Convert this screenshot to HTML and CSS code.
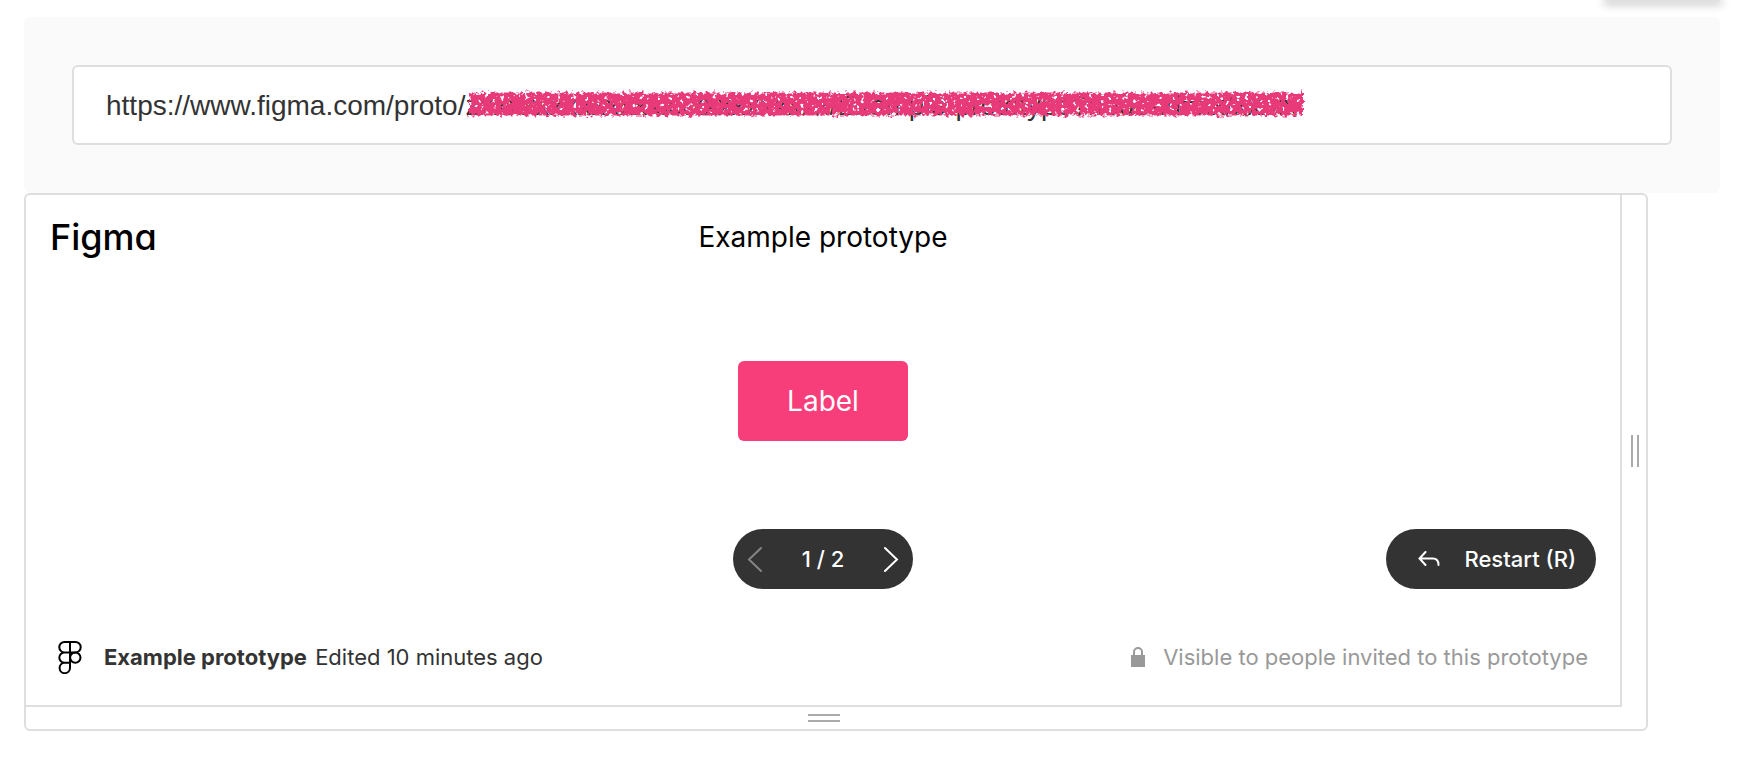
FILE: index.html
```html
<!DOCTYPE html>
<html lang="en">
<head>
  <meta charset="UTF-8">
  <meta name="viewport" content="width=device-width, initial-scale=1.0">
  <title>Example prototype</title>
  <link rel="stylesheet" href="styles.css">
</head>
<body>

<div class="page">
  <div class="toolbar">
    <div class="toolbar-edge"></div>
  </div>

  <div class="url-panel">
    <div class="url-field">
      <input type="text" class="url-input" aria-label="Prototype URL" value="https://www.figma.com/proto/zxxxxxxxxxxxxxxxxxxxxxxxxx/Example-prototype?node-id=xx/xx/xx">
      <svg class="scribble" viewBox="0 0 844 32" aria-hidden="true">
        <filter id="chalk" filterUnits="userSpaceOnUse" x="0" y="0" width="844" height="32" color-interpolation-filters="sRGB">
          <feTurbulence type="fractalNoise" baseFrequency="0.25" numOctaves="2" seed="4" result="noise"/>
          <feDisplacementMap in="SourceGraphic" in2="noise" scale="8" xChannelSelector="R" yChannelSelector="G" result="rough"/>
          <feColorMatrix in="noise" type="matrix" values="0 0 0 0 0  0 0 0 0 0  0 0 0 0 0  0 0 -10 0 7.2" result="holes"/>
          <feComposite in="rough" in2="holes" operator="in"/>
        </filter>
        <path d="M4 16H838" fill="none" stroke="#e83a78" stroke-width="23" filter="url(#chalk)"/>
      </svg>
    </div>
  </div>

  <div class="frame">
    <div class="preview">
      <header class="preview-header">
        <a href="#" class="wordmark">Figma</a>
        <h1 class="title">Example prototype</h1>
      </header>

      <div class="canvas">
        <button type="button" class="label-button">Label</button>
      </div>

      <div class="controls">
        <div class="pager">
          <button type="button" class="pager-button" aria-label="Previous" disabled>
            <svg width="16" height="26" viewBox="0 0 16 26"><path d="M14 2L2 13.500L14 25"/></svg>
          </button>
          <span>1 / 2</span>
          <button type="button" class="pager-button" aria-label="Next">
            <svg width="16" height="26" viewBox="0 0 16 26"><path d="M2 2L14 13.500L2 25"/></svg>
          </button>
        </div>
        <button type="button" class="restart">
          <svg width="22" height="16" viewBox="0 0 22 16"><path d="M7.500 1L1.500 7.500L7.500 14M1.500 7.500H15Q20.500 7.500 20.500 14"/></svg>
          Restart (R)
        </button>
      </div>

      <footer class="preview-footer">
        <svg class="figma-icon" width="24" height="34" viewBox="0 0 24 34">
          <path d="M12 2H6.500a5.200 5.200 0 0 0 0 10.400H12zM12 2h5.500a5.200 5.200 0 0 1 0 10.400H12zM12 12.400H6.500a5.200 5.200 0 0 0 0 10.400H12zM12 22.800H6.500a5.200 5.200 0 1 0 5.500 5.200z"/>
          <circle cx="17.300" cy="17.600" r="5.200"/>
        </svg>
        <p class="file"><strong>Example prototype</strong> <span>Edited 10 minutes ago</span></p>
        <p class="visibility">
          <svg width="14" height="20" viewBox="0 0 14 20"><path d="M0 8H14V20H0z" fill="#999"/><path d="M3 9V5a4 4 0 0 1 8 0V9" fill="none" stroke="#999" stroke-width="2"/></svg>
          Visible to people invited to this prototype
        </p>
      </footer>
    </div>

    <div class="handle-right"><span class="grip grip-vertical"></span></div>
    <div class="handle-bottom"><span class="grip"></span></div>
  </div>
</div>

</body>
</html>
```
FILE: styles.css
```css
* {
  box-sizing: border-box;
}
body {
  margin: 0;
  background: #fff;
  color: #333;
  font-family: Inter, "Liberation Sans", sans-serif;
  font-size: 22px;
  line-height: 28px;
}
button {
  border: 0;
  font: inherit;
  color: #fff;
  cursor: pointer;
}
p {
  margin: 0;
}
.page {
  padding: 0 28px 0 24px;
}
.toolbar {
  display: flex;
  justify-content: flex-end;
  height: 17px;
}
.toolbar-edge {
  width: 114px;
  height: 1px;
  background: #e0e0e0;
  box-shadow: 0 1px 10px 2px rgba(0, 0, 0, 0.3);
}
.url-panel {
  padding: 48px;
  border-radius: 6px;
  background: #fafafa;
}
.url-field {
  position: relative;
}
.url-input {
  display: block;
  width: 100%;
  height: 80px;
  padding: 2px 32px 0;
  border: 2px solid #dedede;
  border-radius: 6px;
  background: #fff;
  color: #333;
  font-family: "Liberation Sans", Arial, sans-serif;
  font-size: 28px;
}
/* marker stroke that hides the file key */
.scribble {
  position: absolute;
  top: 23px;
  left: 393px;
  width: 844px;
  height: 32px;
  pointer-events: none;
}

.frame {
  display: grid;
  grid-template-columns: 1fr 24px;
  grid-template-rows: auto 22px;
  margin-right: 72px;
  border: 2px solid #dedede;
  border-radius: 6px;
}
.preview {
  border-right: 2px solid #dedede;
  border-bottom: 2px solid #dedede;
}
.preview-header,
.controls {
  display: grid;
  grid-template-columns: 1fr auto 1fr;
  align-items: center;
  padding: 0 24px;
}
.preview-header {
  height: 84px;
}
.wordmark {
  color: #000;
  font-size: 36px;
  font-weight: 500;
  font-feature-settings: "cv11";
  text-decoration: none;
}
.title {
  margin: 0;
  color: #000;
  font-size: 28px;
  font-weight: 400;
}
.canvas {
  display: flex;
  justify-content: center;
  padding: 82px 0 88px;
}
.label-button {
  height: 80px;
  padding: 0 49px;
  border-radius: 6px;
  background: #f83e7a;
  font-size: 28px;
}
.pager {
  grid-column: 2;
  display: flex;
  align-items: center;
  justify-content: space-between;
  width: 180px;
  height: 60px;
  padding: 0 14px;
  border-radius: 30px;
  background: #333;
  color: #fff;
  font-weight: 500;
}
.pager-button {
  display: flex;
  padding: 0;
  background: none;
}
.pager-button:disabled {
  opacity: 0.4;
}
.pager-button path,
.restart path {
  fill: none;
  stroke: #fff;
  stroke-width: 2;
  stroke-linecap: round;
}
.restart {
  display: flex;
  align-items: center;
  justify-self: end;
  gap: 24px;
  height: 60px;
  padding: 0 20px 0 32px;
  border-radius: 30px;
  background: #333;
  font-weight: 500;
}
.preview-footer {
  display: flex;
  align-items: center;
  height: 116px;
  padding: 20px 32px 0;
}
.figma-icon {
  margin-right: 22px;
  fill: none;
  stroke: #000;
  stroke-width: 2;
}
.file span {
  margin-left: 2px;
}
.visibility {
  display: flex;
  align-items: center;
  gap: 18px;
  margin-left: auto;
  color: #999;
}
.handle-right,
.handle-bottom {
  display: flex;
  align-items: center;
  justify-content: center;
}
.handle-right {
  padding-left: 2px;
}
.grip {
  width: 32px;
  height: 8px;
  border: solid #aaa;
  border-width: 2px 0;
}
.grip-vertical {
  width: 8px;
  height: 32px;
  border-width: 0 2px;
}
```
